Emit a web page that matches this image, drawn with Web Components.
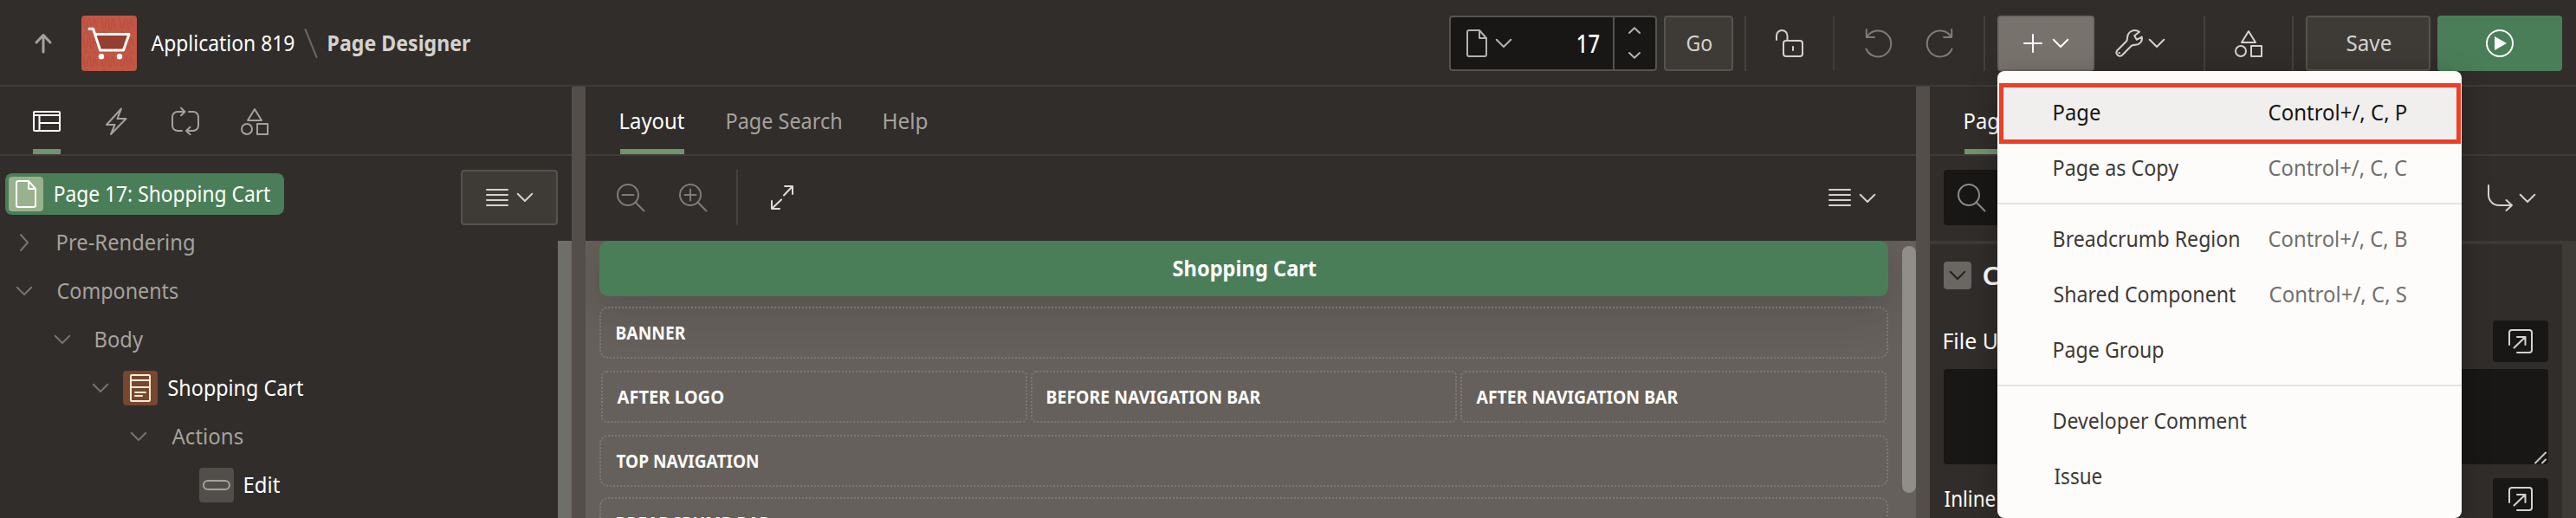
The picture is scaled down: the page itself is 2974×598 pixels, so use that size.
<!DOCTYPE html>
<html lang="en">
<head>
<meta charset="utf-8">
<title>Page Designer</title>
<style>
body{margin:0;background:#312d2a;font-family:"Noto Sans","Open Sans",sans-serif;color:#fff}
</style>
</head>
<body>
<page-designer></page-designer>
<script>
const ICONS = {
  up: [26, 22, '<path d="M13 21V2M5 10L13 1.5L21 10" stroke-width="3"/>'],
  layout: [32, 32, '<rect x="1" y="5" width="30" height="22" rx="1"/><path d="M1 9H31M7.5 9V27M7.5 18H31"/>'],
  bolt: [32, 32, '<path d="M22 1.5L5 20H14.500L10 31L27.500 13H17.500Z"/>'],
  cycle: [32, 32, '<path d="M12 27H7a6 6 0 0 1-6-6V11a6 6 0 0 1 6-6H15M11 .8L15.500 5L11 9.200M20 5H25a6 6 0 0 1 6 6V21a6 6 0 0 1-6 6H17.500M21.500 22.800L17 27L21.500 31.200"/>'],
  shapes: [32, 32, '<path d="M16 2L24 15H8Z"/><circle cx="7" cy="25" r="6"/><rect x="19" y="19" width="12" height="12"/>'],
  page: [24, 32, '<path d="M3 1H15L23 10V29a2 2 0 0 1-2 2H3a2 2 0 0 1-2-2V3a2 2 0 0 1 2-2ZM15 1V10H23"/>'],
  list: [24, 20, '<path d="M0 1H24M0 7H24M0 13H24M0 19H24"/>'],
  down: [18, 10, '<path d="M.7 .8L9 9L17.300 .8"/>'],
  right: [10, 20, '<path d="M1 1L9 10L1 19"/>'],
  stepUp: [14, 8, '<path d="M1 7L7 1.200L13 7"/>'],
  stepDown: [14, 8, '<path d="M1 1L7 6.800L13 1"/>'],
  lock: [32, 32, '<rect x="9" y="13" width="22" height="18" rx="3"/><path d="M1 12V7.200a6.250 6.250 0 0 1 12.500 0V13M20 20V24"/>'],
  undo: [32, 32, '<path d="M2.500 22.500A15 15 0 1 0 3.500 8.500M2.800 0V9H12"/>'],
  redo: [32, 32, '<path d="M29.500 22.500A15 15 0 1 1 28.500 8.500M29.200 0V9H20"/>'],
  plus: [20, 20, '<path d="M10 0V20M0 10H20"/>'],
  wrench: [32, 32, '<path d="M2.300 24.200L12.600 14C14 12.600 14 11 14 9.500C14 4.500 18 1 22.500 1C25 1 26.500 1.500 28 2.800L22.200 7.200L24.800 11.800L30.800 8.600C31.800 14 28 17.500 23.500 17.800C21 18 19.500 18 18.300 19.200L8 29.700A4 4 0 0 1 2.300 24.200Z"/><path d="M4.500 27H5"/>'],
  play: [32, 32, '<circle cx="16" cy="16" r="15"/><path d="M10 8L24 16L10 24Z" fill="currentColor" stroke="none"/>'],
  lens: [32, 32, '<circle cx="13" cy="13" r="12"/><path d="M21.500 21.500L31.500 31.500"/>'],
  zoomOut: [32, 32, '<circle cx="13" cy="13" r="12"/><path d="M21.500 21.500L31.500 31.500M6.500 13H19.500"/>'],
  zoomIn: [32, 32, '<circle cx="13" cy="13" r="12"/><path d="M21.500 21.500L31.500 31.500M6.500 13H19.500M13 6.500V19.500"/>'],
  expand: [26, 28, '<path d="M16 1H25V10M25 1L15 11.500M1 18V27H10M1 27L12 16.500"/>'],
  open: [28, 28, '<path d="M1 18V4a3 3 0 0 1 3-3H24a3 3 0 0 1 3 3V24a3 3 0 0 1-3 3H10M6.500 21.500L19.500 9M10 9H19.500V18"/>'],
  goto: [30, 30, '<path d="M1 0V11a12 12 0 0 0 12 12H28M21.500 17L28 23L21.500 29"/>'],
  region: [24, 32, '<rect x="1" y="1" width="22" height="30" rx="1"/><path d="M1 7H23M1 15H23M6 21H18M6 25H14"/>'],
  pill: [32, 12, '<rect x="1" y="1" width="30" height="10" rx="5"/>'],
  grip: [14, 14, '<path d="M1 13.500L13 1.500M9 13.500L13 9.500"/>'],
  slash: [16, 34, '<path d="M1.500 1L14.500 33"/>'],
  cart: [64, 64, '<defs><pattern id="w" width="21" height="22" patternUnits="userSpaceOnUse"><path d="M1 2C4 2 2 15 5 15S6 3 9 3S9 16 12 16S13 4 15 4S16 13 19 13M3 24C3 18 6 17 8 21M13 24C14 18 17 19 17 23" stroke="#ad4536" stroke-width="1.200" opacity=".6"/></pattern></defs><rect width="64" height="64" rx="4" fill="#c25745" stroke="none"/><rect width="64" height="64" rx="4" fill="url(#w)" stroke="none"/><path d="M16.500 22H55L48.700 40.300H21.700Z" fill="#943f30" stroke="none"/><path d="M9 15.300H13.500L21.700 40H48.500L55 21.500H16.500" stroke-width="3"/><circle cx="23" cy="47.300" r="3.200" fill="currentColor" stroke="none"/><circle cx="44" cy="47.300" r="3.200" fill="currentColor" stroke="none"/>']
};

function define(name, html, init) {
  const tpl = document.createElement('template');
  tpl.innerHTML = html;
  customElements.define(name, class extends HTMLElement {
    constructor() {
      super();
      this.attachShadow({ mode: 'open' }).append(tpl.content.cloneNode(true));
    }
    connectedCallback() { if (init) init.call(this, this.shadowRoot); }
  });
}

/* Icon: name picks the drawing, the colour is inherited. */
define('pd-icon', '<style>:host{display:block;flex:none}svg{display:block;overflow:visible;fill:none;stroke:currentColor;stroke-width:2;stroke-linecap:round;stroke-linejoin:round}</style>', function (root) {
  const [w, h, body] = ICONS[this.getAttribute('name')];
  const holder = document.createElement('div');
  holder.innerHTML = `<svg width="${w}" height="${h}" viewBox="0 0 ${w} ${h}">${body}</svg>`;
  root.append(holder.firstChild);
});

/* Label: one line of text, condensed to the width in w. */
const pen = document.createElement('canvas').getContext('2d');
define('pd-text', '<style>:host{display:block;flex:none;height:32px;line-height:32px;white-space:pre}span{display:inline-block;transform-origin:0 50%}</style><span><slot></slot></span>', function (root) {
  const size = this.getAttribute('size') || 24.5, weight = this.getAttribute('weight') || 400, w = +this.getAttribute('w');
  this.style.cssText += `;font-size:${size}px;font-weight:${weight};width:${w}px`;
  pen.font = `${weight} ${size}px "Noto Sans"`;
  const m = pen.measureText(this.textContent);
  const k = w / (m.actualBoundingBoxLeft + m.actualBoundingBoxRight);
  root.querySelector('span').style.transform = `translateX(${m.actualBoundingBoxLeft * k + .5}px) scaleX(${k})`;
});

define('pd-rule', '<style>:host{display:block;flex:none;width:2px;height:64px;background:#45413d}</style>');

define('pd-button', `<style>
:host{display:flex;flex:none;box-sizing:border-box;height:64px;align-items:center;justify-content:center;border:2px solid #56524d;border-radius:4px;background:#3e3a36;color:#d4d2ce}
:host([kind=on]){background:#78726d;border-color:#6d6762;color:#fff}
:host([kind=go]){background:#4a7e58;border-color:#4a7e58;color:#fff}
:host([kind=dark]){background:#181715;border-color:#181715;height:48px;width:64px}
</style><slot></slot>`);

define('pd-header', `<style>
:host{display:flex;align-items:center;height:98px;border-bottom:2px solid #3f3b38;box-sizing:content-box}
pd-icon,pd-rule{position:static}
.bar{display:flex;align-items:center;height:64px;padding-top:2px}
.field{display:flex;align-items:center;box-sizing:border-box;width:240px;height:64px;border:2px solid #56524d;border-radius:4px;background:#181715;color:#b5b2ad;margin-left:1130px}
.step{display:flex;flex-direction:column;justify-content:space-between;align-items:center;width:48px;height:60px;box-sizing:border-box;padding:11px 0 12px;border-left:2px solid #56524d}
</style>
<div class="bar">
<pd-icon name="up" style="color:#a5a29d;margin-left:37px"></pd-icon>
<pd-icon name="cart" style="margin-left:31px"></pd-icon>
<pd-text w="165" style="margin-left:16px">Application 819</pd-text>
<pd-icon name="slash" style="color:#6b6762;margin-left:12px"></pd-icon>
<pd-text w="164" weight="700" style="margin-left:12px;color:#d4d2cf">Page Designer</pd-text>
<div class="field">
  <pd-icon name="page" style="margin-left:18px"></pd-icon>
  <pd-icon name="down" style="margin-left:10px"></pd-icon>
  <pd-text w="25" size="29" weight="500" style="margin-left:76px;margin-right:16px;color:#fff">17</pd-text>
  <div class="step"><pd-icon name="stepUp"></pd-icon><pd-icon name="stepDown"></pd-icon></div>
</div>
<pd-button style="width:80px;margin-left:8px"><pd-text w="29">Go</pd-text></pd-button>
<pd-rule style="margin-left:13px"></pd-rule>
<pd-icon name="lock" style="margin-left:34px;color:#d4d2ce"></pd-icon>
<pd-rule style="margin-left:34px;background:#3f3b38"></pd-rule>
<pd-icon name="undo" style="margin-left:34px;color:#7f7b77"></pd-icon>
<pd-icon name="redo" style="margin-left:40px;color:#7f7b77"></pd-icon>
<pd-rule style="margin-left:34px"></pd-rule>
<pd-button kind="on" style="width:112px;margin-left:14px"><pd-icon name="plus"></pd-icon><pd-icon name="down" style="margin-left:13px"></pd-icon></pd-button>
<pd-icon name="wrench" style="margin-left:24px;color:#d4d2ce"></pd-icon>
<pd-icon name="down" style="margin-left:7px;color:#d4d2ce"></pd-icon>
<pd-rule style="margin-left:45px"></pd-rule>
<pd-icon name="shapes" style="margin-left:34px;color:#d4d2ce"></pd-icon>
<pd-rule style="margin-left:34px"></pd-rule>
<pd-button style="width:144px;margin-left:14px"><pd-text w="51">Save</pd-text></pd-button>
<pd-button kind="go" style="width:144px;margin-left:8px"><pd-icon name="play"></pd-icon></pd-button>
</div>`);

define('pd-tabs', '<style>:host{display:flex;height:78px;border-bottom:2px solid #3f3b38;color:#a5a29d}</style><slot></slot>');
define('pd-tab', '<style>:host{display:flex;align-items:center;flex:none;height:78px;box-sizing:border-box;border:solid transparent;border-width:6px 0;padding-top:2px}:host([on]){border-bottom-color:#72936b;color:#fff}</style><slot></slot>');

define('pd-node', `<style>
:host{display:flex;align-items:center;height:56px;color:#a5a29d}
.twig{width:26px;display:flex;justify-content:center;color:#77736e}
.box{display:flex;align-items:center;justify-content:center;width:40px;height:40px;border-radius:4px;margin-left:13px;margin-right:12px}
</style>
<div class="twig"></div><slot></slot>`, function (root) {
  this.style.paddingLeft = 15 + 44 * this.getAttribute('level') + 'px';
  const twig = this.getAttribute('twig'), icon = this.getAttribute('icon');
  if (twig) root.querySelector('.twig').innerHTML = `<pd-icon name="${twig}"></pd-icon>`;
  if (icon) {
    const box = document.createElement('div');
    box.className = 'box';
    box.style.cssText = `background:${this.getAttribute('fill')};color:${this.getAttribute('ink')}`;
    box.innerHTML = `<pd-icon name="${icon}"></pd-icon>`;
    root.querySelector('.twig').after(box);
    this.style.color = '#fff';
  } else root.querySelector('.twig').style.marginRight = '25px';
});

define('pd-tree-pane', `<style>
:host{display:block;width:660px;height:498px;flex:none;overflow:hidden}
.root{display:flex;height:98px;padding:16px 16px 0 6px;box-sizing:border-box;justify-content:space-between}
.chip{display:flex;align-items:center;width:322px;height:48px;border-radius:8px;background:#4a7e58;margin-top:4px}
.chip div{display:flex;align-items:center;justify-content:center;width:40px;height:40px;border-radius:4px;background:#98b28d;margin:0 13px 0 4px}
.body{display:flex;height:320px}.nodes{flex:1}
.nodes{margin-top:-26px}
.bar{width:16px;background:#6f6e69}
</style>
<pd-tabs>
  <pd-tab on style="margin-left:38px"><pd-icon name="layout"></pd-icon></pd-tab>
  <pd-tab style="margin-left:48px"><pd-icon name="bolt"></pd-icon></pd-tab>
  <pd-tab style="margin-left:48px"><pd-icon name="cycle"></pd-icon></pd-tab>
  <pd-tab style="margin-left:48px"><pd-icon name="shapes"></pd-icon></pd-tab>
</pd-tabs>
<div class="root">
  <div class="chip"><div><pd-icon name="page"></pd-icon></div><pd-text w="249">Page 17: Shopping Cart</pd-text></div>
  <pd-button style="width:112px"><pd-icon name="list"></pd-icon><pd-icon name="down" style="margin-left:11px"></pd-icon></pd-button>
</div>
<div class="body">
  <div class="nodes">
    <pd-node level="0" twig="right"><pd-text w="157">Pre-Rendering</pd-text></pd-node>
    <pd-node level="0" twig="down"><pd-text w="139">Components</pd-text></pd-node>
    <pd-node level="1" twig="down"><pd-text w="55">Body</pd-text></pd-node>
    <pd-node level="2" twig="down" icon="region" fill="#77472f" ink="#fdebd2"><pd-text w="156">Shopping Cart</pd-text></pd-node>
    <pd-node level="3" twig="down"><pd-text w="82">Actions</pd-text></pd-node>
    <pd-node level="4" icon="pill" fill="#524e4a" ink="#a5a29d"><pd-text w="41">Edit</pd-text></pd-node>
  </div>
  <div class="bar"></div>
</div>`);

define('pd-region', '<style>:host{display:flex;align-items:center;box-sizing:border-box;height:60px;border:2px dotted #7d7873;border-radius:10px;padding-left:17px;color:#fcfbfa}</style><slot></slot>');

define('pd-layout-pane', `<style>
:host{display:block;width:1536px;height:498px;flex:none;overflow:hidden}
.tools{display:flex;align-items:flex-start;height:98px;padding:16px 47px 0 36px;box-sizing:border-box;color:#7f7b77}
.tools pd-icon{margin-top:16px}
.canvas{display:flex;height:320px;background:#65605b;overflow:hidden}
.grid{width:1488px;margin-left:16px}
.title{display:flex;align-items:center;justify-content:center;height:64px;border-radius:10px;background:#4a7e58;box-shadow:0 12px 48px rgba(30,24,20,.22);margin-bottom:12px}
.row{display:flex;gap:4px;margin:14px 2px}
.row pd-region{flex:1;border-radius:6px;padding-left:16px}
.bar{width:16px;height:285px;margin:6px 0 0 16px;border-radius:8px;background:#918e8a}
</style>
<pd-tabs>
  <pd-tab on style="margin-left:40px"><pd-text w="74">Layout</pd-text></pd-tab>
  <pd-tab style="margin-left:49px"><pd-text w="132">Page Search</pd-text></pd-tab>
  <pd-tab style="margin-left:49px"><pd-text w="50">Help</pd-text></pd-tab>
</pd-tabs>
<div class="tools">
  <pd-icon name="zoomOut"></pd-icon><pd-icon name="zoomIn" style="margin-left:40px"></pd-icon>
  <pd-rule style="margin-left:34px"></pd-rule>
  <pd-icon name="expand" style="margin:18px auto 0 38px;color:#dedcd8"></pd-icon>
  <pd-icon name="list" style="margin-top:22px;color:#d4d2ce"></pd-icon><pd-icon name="down" style="margin:28px 0 0 11px;color:#d4d2ce"></pd-icon>
</div>
<div class="canvas">
  <div class="grid">
    <div class="title"><pd-text w="165" weight="700">Shopping Cart</pd-text></div>
    <pd-region><pd-text w="80" size="21" weight="700">BANNER</pd-text></pd-region>
    <div class="row">
      <pd-region><pd-text w="123" size="21" weight="700">AFTER LOGO</pd-text></pd-region>
      <pd-region><pd-text w="247" size="21" weight="700">BEFORE NAVIGATION BAR</pd-text></pd-region>
      <pd-region><pd-text w="233" size="21" weight="700">AFTER NAVIGATION BAR</pd-text></pd-region>
    </div>
    <pd-region><pd-text w="164" size="21" weight="700">TOP NAVIGATION</pd-text></pd-region>
    <pd-region style="margin-top:12px"><pd-text w="178" size="21" weight="700">BREADCRUMB BAR</pd-text></pd-region>
  </div>
  <div class="bar"></div>
</div>`);

define('pd-property-pane', `<style>
:host{display:block;flex:1;height:498px;overflow:hidden}
.find{display:flex;align-items:flex-start;height:98px;padding:16px 47px 0 16px;box-sizing:border-box;color:#d4d2ce}
.input{display:flex;align-items:center;width:540px;height:64px;border-radius:4px;background:#181715;color:#8f8c88;padding-left:16px;margin-right:auto}
.main{display:flex;height:320px;box-sizing:border-box;border-top:4px solid #3e3a36}
.props{width:698px;margin:20px 0 0 16px}
.strip{width:16px;background:#3e3a36;margin-left:16px}
.group{display:flex;align-items:center;height:32px}
.fold{display:flex;align-items:center;justify-content:center;width:32px;height:32px;border-radius:4px;background:#6a6762;color:#24211f;margin-right:13px}
.label{display:flex;align-items:center;justify-content:space-between;height:48px}
.area{display:flex;align-items:flex-end;justify-content:flex-end;height:110px;box-sizing:border-box;padding:0 2px 1px 0;border-radius:4px;background:#181715;margin:8px 0 16px;color:#c9c6c2}
</style>
<pd-tabs><pd-tab on style="margin-left:40px"><pd-text w="53">Page</pd-text></pd-tab></pd-tabs>
<div class="find"><div class="input"><pd-icon name="lens"></pd-icon></div><pd-icon name="goto" style="margin-top:18px"></pd-icon><pd-icon name="down" style="margin:28px 0 0 7px"></pd-icon></div>
<div class="main">
  <div class="props">
    <div class="group"><div class="fold"><pd-icon name="down"></pd-icon></div><pd-text w="52" size="29" weight="600">CSS</pd-text></div>
    <div class="label" style="margin-top:36px"><pd-text w="102">File URLs</pd-text><pd-button kind="dark"><pd-icon name="open"></pd-icon></pd-button></div>
    <div class="area"><pd-icon name="grip"></pd-icon></div>
    <div class="label"><pd-text w="59">Inline</pd-text><pd-button kind="dark"><pd-icon name="open"></pd-icon></pd-button></div>
  </div>
  <div class="strip"></div>
</div>`);

define('pd-menu-item', `<style>
:host{display:flex;align-items:center;box-sizing:border-box;height:64px;padding:0 64.500px;justify-content:space-between;color:#3d3a38}
:host([on]){height:70px;margin:-2px 1px -4px 2px;padding:0 58.500px 2px 57.500px;border:5px solid #ec4026;background:#f0efee;color:#161513}
::slotted([slot=key]){color:#72706d}
:host([on]) ::slotted([slot=key]){color:#161513}
</style><slot></slot><slot name="key"></slot>`);

define('pd-menu', `<style>
:host{display:block;position:absolute;left:2306px;top:82px;width:536px;height:516px;box-sizing:border-box;padding-top:16px;background:#fdfcfb;border-radius:8px;box-shadow:0 8px 32px rgba(0,0,0,.28)}
hr{height:2px;border:0;background:#e5e3e0;margin:8px 0}
</style>
<pd-menu-item on><pd-text w="53">Page</pd-text><pd-text slot="key" w="159">Control+/, C, P</pd-text></pd-menu-item>
<pd-menu-item><pd-text w="144">Page as Copy</pd-text><pd-text slot="key" w="159">Control+/, C, C</pd-text></pd-menu-item>
<hr>
<pd-menu-item><pd-text w="214">Breadcrumb Region</pd-text><pd-text slot="key" w="159">Control+/, C, B</pd-text></pd-menu-item>
<pd-menu-item><pd-text w="210">Shared Component</pd-text><pd-text slot="key" w="158">Control+/, C, S</pd-text></pd-menu-item>
<pd-menu-item><pd-text w="126">Page Group</pd-text></pd-menu-item>
<hr>
<pd-menu-item><pd-text w="222.500">Developer Comment</pd-text></pd-menu-item>
<pd-menu-item><pd-text w="55">Issue</pd-text></pd-menu-item>`);

define('page-designer', `<style>
:host{display:block;position:relative;width:2974px;height:598px;overflow:hidden;background:#312d2a}
main{display:flex}
.split{width:16px;flex:none;background:#534e49}
</style>
<pd-header></pd-header>
<main><pd-tree-pane></pd-tree-pane><div class="split"></div><pd-layout-pane></pd-layout-pane><div class="split"></div><pd-property-pane></pd-property-pane></main>
<pd-menu></pd-menu>`);
</script>
</body>
</html>
